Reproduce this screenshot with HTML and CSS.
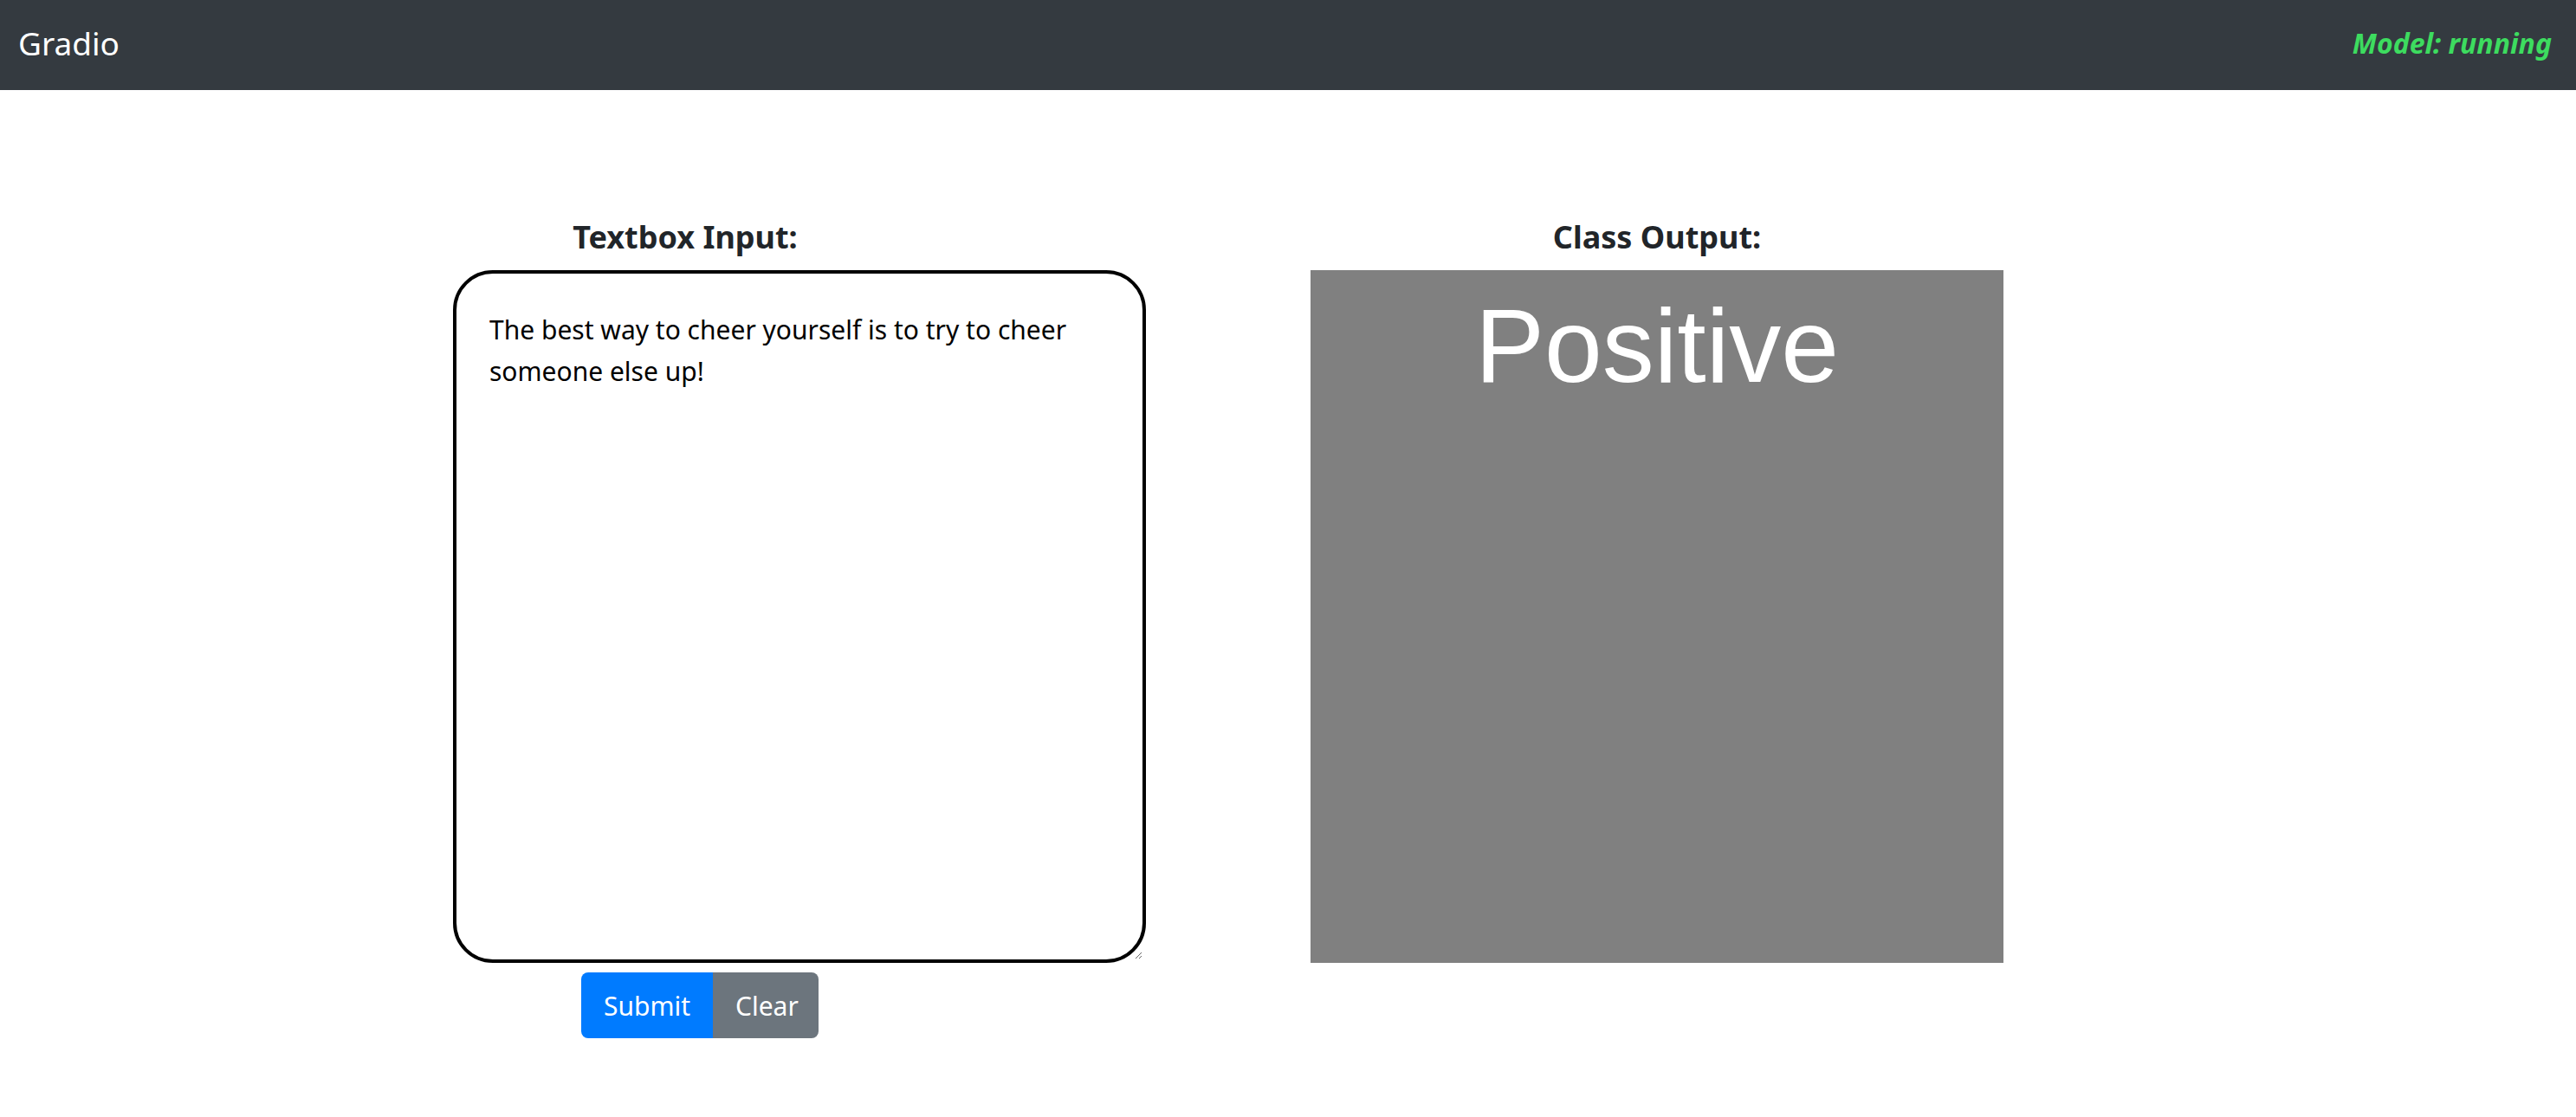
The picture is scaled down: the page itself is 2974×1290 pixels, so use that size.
FILE: index.html
```html
<!DOCTYPE html>
<html lang="en">
<head>
<meta charset="utf-8">
<title>Gradio</title>
<link rel="stylesheet" href="styles.css">
</head>
<body>
<nav class="navbar">
  <span class="brand">Gradio</span>
  <span class="status">Model: running</span>
</nav>
<main class="panels">
  <section class="panel input-panel">
    <div class="head input-head">Textbox Input:</div>
    <textarea class="textbox">The best way to cheer yourself is to try to cheer someone else up!</textarea>
    <div class="btn-row">
      <div class="btn-group">
        <button class="btn btn-submit">Submit</button><button class="btn btn-clear">Clear</button>
      </div>
    </div>
  </section>
  <section class="panel output-panel">
    <div class="head output-head">Class Output:</div>
    <div class="class-box">
      <div class="class-label">Positive</div>
    </div>
  </section>
</main>
</body>
</html>
```
FILE: styles.css
```css
* { box-sizing: border-box; }
html, body { margin: 0; padding: 0; background: #ffffff; }
body {
  font-family: "Noto Sans", "Open Sans", sans-serif;
  color: #212529;
}
.navbar {
  height: 104px;
  background: #343a40;
  display: flex;
  align-items: center;
  justify-content: space-between;
  padding: 0 28px 6px 21px;
}
.brand {
  color: #ffffff;
  font-size: 37px;
  font-weight: 400;
}
.status {
  color: #3ddc5f;
  font-size: 32px;
  font-weight: 700;
  font-style: italic;
}
.panels {
  display: flex;
  align-items: flex-start;
  gap: 190px;
  padding: 148px 0 0 523px;
}
.panel {
  width: 800px;
  display: flex;
  flex-direction: column;
}
.head {
  font-size: 36px;
  font-weight: 700;
  line-height: 44px;
  margin-bottom: 16px;
  color: #212529;
}
.input-head {
  width: 536px;
  text-align: center;
}
.output-head {
  text-align: center;
}
.textbox {
  width: 800px;
  height: 800px;
  border: 4px solid #000000;
  border-radius: 46px;
  padding: 41px 38px;
  font-family: "Noto Sans", "Open Sans", sans-serif;
  font-size: 30px;
  line-height: 48px;
  color: #000000;
  resize: both;
  outline: none;
  margin: 0;
  display: block;
}
.btn-row {
  width: 570px;
  display: flex;
  justify-content: center;
  margin-top: 11px;
}
.btn-group {
  display: flex;
}
.btn {
  border: none;
  color: #ffffff;
  font-family: "Noto Sans", "Open Sans", sans-serif;
  font-size: 30px;
  height: 76px;
  padding: 0 26px;
  margin: 0;
}
.btn-submit {
  background: #007bff;
  border-radius: 8px 0 0 8px;
  width: 152px;
}
.btn-clear {
  background: #6c757d;
  border-radius: 0 8px 8px 0;
  width: 122px;
}
.class-box {
  width: 800px;
  height: 800px;
  background: #808080;
  padding-top: 18px;
  text-align: center;
}
.class-label {
  font-family: "Liberation Sans", Arial, sans-serif;
  font-size: 120px;
  line-height: 138px;
  color: #ffffff;
}
```
